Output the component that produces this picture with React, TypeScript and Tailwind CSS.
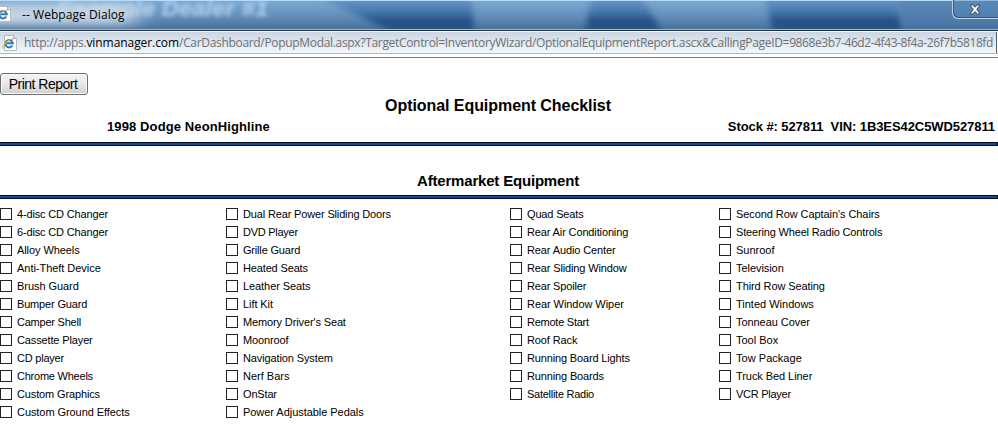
import React from "react";

type Item = [label: string, fit: number];

// Each item carries the total width, in pixels, by which its label is tightened.
const columns: { width: string; items: Item[] }[] = [
  {
    width: "w-[226px]",
    items: [["4-disc CD Changer", 2.6], ["6-disc CD Changer", 2.6], ["Alloy Wheels", 1], ["Anti-Theft Device", 0.6], ["Brush Guard", 0.6], ["Bumper Guard", 2], ["Camper Shell", 2.8], ["Cassette Player", 2], ["CD player", 2], ["Chrome Wheels", 3], ["Custom Graphics", 2], ["Custom Ground Effects", 1.4]],
  },
  {
    width: "w-[284px]",
    items: [["Dual Rear Power Sliding Doors", 4.4], ["DVD Player", 2.6], ["Grille Guard", 2.2], ["Heated Seats", 1.8], ["Leather Seats", 1], ["Lift Kit", 0.6], ["Memory Driver's Seat", 2.6], ["Moonroof", 1], ["Navigation System", 2], ["Nerf Bars", 0], ["OnStar", 1], ["Power Adjustable Pedals", 1]],
  },
  {
    width: "w-[209px]",
    items: [["Quad Seats", 1.6], ["Rear Air Conditioning", 2.8], ["Rear Audio Center", 2], ["Rear Sliding Window", 2.6], ["Rear Spoiler", 2], ["Rear Window Wiper", 1], ["Remote Start", 3], ["Roof Rack", 1], ["Running Board Lights", 3], ["Running Boards", 2], ["Satellite Radio", 4]],
  },
  {
    width: "w-[279px]",
    items: [["Second Row Captain's Chairs", 2], ["Steering Wheel Radio Controls", 4.8], ["Sunroof", 0], ["Television", 0.6], ["Third Row Seating", 1.6], ["Tinted Windows", 0], ["Tonneau Cover", 0.8], ["Tool Box", 0], ["Tow Package", -0.4], ["Truck Bed Liner", 1], ["VCR Player", 2.6]],
  },
];

function PageIcon() {
  return (
    <svg width="16" height="16" viewBox="0 0 16 16" className="shrink-0">
      <path d="M2.5 .5h9l3 3v12h-12z" fill="#fdfdfd" stroke="#b4bbc1" />
      <path d="M11.5 .5v3h3" fill="#e4e9ed" stroke="#a9b1b8" />
      <path d="M10.3 10.6A3.7 3.7 0 1 1 10.8 8.3H4.6" fill="none" stroke="#1c7cc9" strokeWidth="2" />
      <path d="M1.3 13.6C-.3 12 5.2 4 11.8 3.8" fill="none" stroke="#e6b62e" strokeWidth="1.3" />
    </svg>
  );
}

function Rule() {
  return <div className="h-1 w-[998px] border-y border-r border-[#030d26] bg-[#174a91]" />;
}

function TitleBar() {
  return (
    <div className="relative h-[30px] overflow-hidden bg-linear-to-b from-[#7daad5] via-[#6390bc] via-52% to-[#486f99]">
      <svg width="998" height="30" className="absolute inset-0">
        <defs>
          <filter id="soft" x="-20%" y="-50%" width="140%" height="200%"><feGaussianBlur stdDeviation="3" /></filter>
          <filter id="ghost" x="-10%" y="-50%" width="120%" height="200%"><feGaussianBlur stdDeviation="2" /></filter>
          <filter id="haze" x="-20%" y="-100%" width="140%" height="300%"><feGaussianBlur stdDeviation="12 5" /></filter>
          <linearGradient id="deep" gradientUnits="userSpaceOnUse" x1="0" y1="0" x2="0" y2="30">
            <stop offset="0" stopColor="#6797c8" />
            <stop offset=".5" stopColor="#3d6ea4" />
            <stop offset=".65" stopColor="#214d80" />
            <stop offset="1" stopColor="#2b5787" />
          </linearGradient>
        </defs>
        <path d="M280 -20H471L475 50H420L378 25Z" fill="url(#deep)" filter="url(#soft)" />
        <path d="M594 -20H632L672 50H582Z" fill="url(#deep)" filter="url(#soft)" />
        <path d="M760 -20H895L905 50H778Z" fill="url(#deep)" filter="url(#soft)" />
        <path d="M895 -20H1020V50H905Z" fill="#4475a7" opacity=".6" filter="url(#soft)" />
        <text x="57" y="16" fontFamily="Liberation Sans" fontWeight="700" fontStyle="italic" fontSize="22" textLength="211" lengthAdjust="spacingAndGlyphs" fill="#c9e2fb" opacity=".8" filter="url(#ghost)">Example Dealer #1</text>
        <rect x="-20" y="4" width="156" height="21" fill="#c8d7e5" opacity=".95" filter="url(#haze)" />
      </svg>
      <div className="absolute inset-x-0 top-0 h-px bg-[#b6dcfa]" />
      <div className="absolute inset-x-0 bottom-0 h-px bg-[#a0b8cf]" />
      <div className="relative flex h-full items-center">
        <div className="-ml-1 flex h-4 -translate-y-px"><PageIcon /></div>
        <span className="ml-[10px] pb-px font-['Open_Sans',sans-serif] text-[12px] leading-4 tracking-[0.06px] text-black">-- Webpage Dialog</span>
        <div className="mb-auto ml-auto flex h-[19px] w-[46px] items-center justify-center rounded-bl-md border-b border-l border-[#c1d4e5] bg-[#5b86b3]/40 shadow-[inset_1px_-1px_0_#345b83]">
          <svg width="12" height="11" viewBox="0 0 12 11" className="mr-[2px]">
            <path d="M1 1h3l2 2.3L8 1h3L7.7 5.4 11 10H8L6 7.4 4 10H1l3.3-4.6z" fill="white" stroke="#3e4e60" />
          </svg>
        </div>
      </div>
    </div>
  );
}

export default function App() {
  return (
    <div className="h-[432px] w-[998px] overflow-hidden bg-white font-['Liberation_Sans',Arial,sans-serif] text-black">
      <TitleBar />
      <div className="h-px bg-[#1c3048]" />
      <div className="h-px bg-[#f4f7fa]" />
      <div className="flex h-[21px] w-[997px] items-center border-r border-[#506070] bg-linear-to-b from-[#ccd6e1] to-[#f3f8fc] pl-[2px]">
        <PageIcon />
        <span className="ml-[6px] whitespace-pre font-['Open_Sans',sans-serif] text-[12px] leading-4 text-[#6d7177]">
          <span className="tracking-[-0.25px]">http://apps.</span>
          <span className="tracking-[-0.07px] text-black">vinmanager.com</span>
          <span className="tracking-[-0.32px]">/CarDashboard/PopupModal.aspx?TargetControl=InventoryWizard/OptionalEquipmentReport.ascx&amp;CallingPageID=</span>
          <span className="tracking-[-0.42px]">9868e3b7-46d2-4f43-8f4a-26f7b5818fd</span>
        </span>
      </div>
      <div className="h-px bg-[#a9bdbd]" />
      <div className="h-[3px] bg-white" />
      <div className="h-px bg-[#70877d]" />

      <div className="h-[84px] pt-[15px]">
        <button className="block h-[22px] w-[88px] rounded-[3px] border border-[#707070] bg-linear-to-b from-[#f3f3f3] via-[#e9e9e9] to-[#cfcfcf] pr-[2px] text-[14px] leading-5 tracking-[-0.5px] whitespace-nowrap shadow-[inset_0_0_0_1px_#fafafa]">Print Report</button>
        <h1 className="pr-[2px] text-center text-[16px] leading-[21px] font-bold tracking-[-0.06px]">Optional Equipment Checklist</h1>
        <div className="flex justify-between pr-[3px] pl-[107px] text-[13px] leading-[21px] font-bold whitespace-pre">
          <span className="tracking-[0.11px]">1998 Dodge NeonHighline</span>
          <span className="tracking-[-0.08px]">Stock #: 527811  VIN: 1B3ES42C5WD527811</span>
        </div>
      </div>
      <Rule />
      <h2 className="h-[49px] pt-[25px] pr-[2px] text-center text-[15px] leading-5 font-bold tracking-[-0.19px]">Aftermarket Equipment</h2>
      <Rule />
      <div className="flex pt-[6px]">
        {columns.map((column) => (
          <div key={column.items[0][0]} className={column.width}>
            {column.items.map(([item, fit]) => (
              <label key={item} className="flex h-[18px] items-center">
                <input type="checkbox" className="size-3 shrink-0 appearance-none border border-[#222] bg-white" />
                <span className="ml-[5px] text-[11px] leading-[18px] whitespace-nowrap" style={{ letterSpacing: -fit / item.length }}>{item}</span>
              </label>
            ))}
          </div>
        ))}
      </div>
    </div>
  );
}
